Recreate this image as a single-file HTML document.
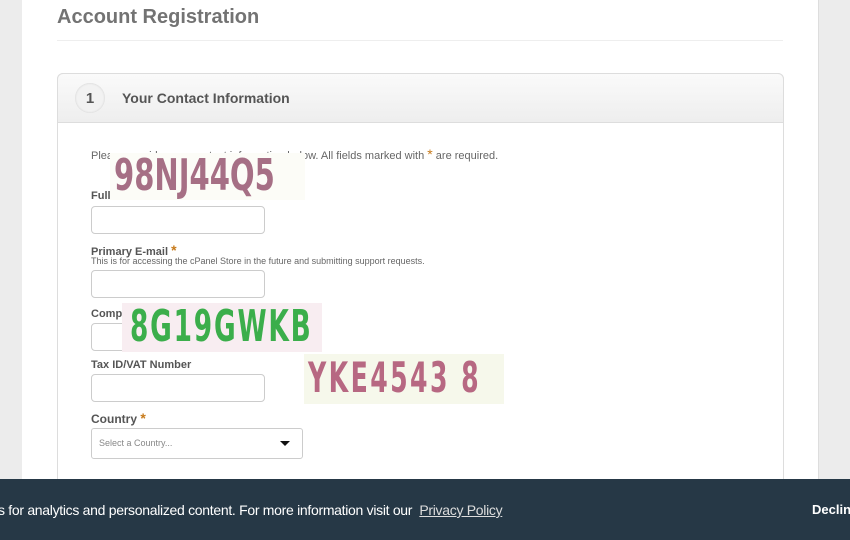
<!DOCTYPE html>
<html><head><meta charset="utf-8"><style>
html,body{margin:0;width:850px;height:540px;overflow:hidden}
body{background:#ececec;font-family:"Liberation Sans",sans-serif;position:relative}
.wrap{position:absolute;left:22px;top:0;width:796px;height:540px;background:#fff;border-right:1px solid #ddd}
.abs{position:absolute}
h1{position:absolute;left:57px;top:6px;margin:0;font-size:20px;color:#737373;font-weight:bold}
.hr{left:57px;top:40px;width:726px;height:1px;background:#eee}
.panel{left:57px;top:73px;width:725px;height:460px;border:1px solid #ddd;border-radius:6px 6px 0 0}
.ph{left:57px;top:73px;width:725px;height:48px;border:1px solid #ddd;border-radius:6px 6px 0 0;background:linear-gradient(#fafafa,#eeeeee);border-bottom:1px solid #ddd}
.num{left:75px;top:83px;width:30px;height:30px;border-radius:50%;background:#f2f2f2;box-shadow:0 0 2px #ccc inset;text-align:center;line-height:32px;font-weight:bold;color:#555;font-size:15px}
.pt{left:122px;top:90px;font-size:14px;font-weight:bold;color:#555}
.lbl{font-size:11px;font-weight:bold;color:#555}
.star{color:#c77a1a;font-size:14px}
.inp{width:172px;height:26px;border:1px solid #ccc;border-radius:4px;background:#fff}
.small{font-size:9px;color:#666}
.cap{overflow:hidden}
.cap span{position:absolute;left:4px;display:block;font-family:"DejaVu Sans",sans-serif;font-weight:bold;white-space:nowrap;transform-origin:0 0}
.banner{left:0;top:479px;width:850px;height:61px;background:#263846;color:#fff;font-size:14px}
</style></head><body>
<div class="wrap"></div>
<h1>Account Registration</h1>
<div class="abs hr"></div>
<div class="abs panel"></div>
<div class="abs ph"></div>
<div class="abs num">1</div>
<div class="abs pt">Your Contact Information</div>
<div class="abs" style="left:91px;top:146px;font-size:11px;color:#666">Please provide your contact information below. All fields marked with <span class="star">*</span> are required.</div>
<div class="abs lbl" style="left:91px;top:190px">Full Name</div>
<div class="abs inp" style="left:91px;top:206px"></div>
<div class="abs lbl" style="left:91px;top:242px">Primary E-mail <span class="star">*</span></div>
<div class="abs small" style="left:91px;top:256px">This is for accessing the cPanel Store in the future and submitting support requests.</div>
<div class="abs inp" style="left:91px;top:270px"></div>
<div class="abs lbl" style="left:91px;top:308px">Company</div>
<div class="abs inp" style="left:91px;top:323px"></div>
<div class="abs lbl" style="left:91px;top:359px">Tax ID/VAT Number</div>
<div class="abs inp" style="left:91px;top:374px"></div>
<div class="abs lbl" style="left:91px;top:410px;font-size:12px">Country <span class="star">*</span></div>
<div class="abs" style="left:91px;top:428px;width:210px;height:29px;border:1px solid #ccc;border-radius:3px;background:#fff;font-size:9px;color:#888;line-height:29px;text-indent:7px">Select a Country...<span style="position:absolute;left:188px;top:12px;width:0;height:0;border-left:5px solid transparent;border-right:5px solid transparent;border-top:5px solid #111"></span></div>

<div class="abs cap" style="left:110px;top:153px;width:195px;height:47px;background:#fcfcf7"><span style="top:-2px;color:#a66f85;font-size:44px;line-height:50px;transform:scaleX(0.66)">98NJ44Q5</span></div>
<div class="abs cap" style="left:122px;top:303px;width:200px;height:49px;background:#f8edf1"><span style="top:-2px;left:8px;color:#3bae4b;font-size:44px;line-height:52px;letter-spacing:3px;transform:scaleX(0.6)">8G19GWKB</span></div>
<div class="abs cap" style="left:304px;top:354px;width:200px;height:50px;background:#f6f8eb"><span style="top:-2px;color:#b76882;font-size:42px;line-height:52px;letter-spacing:4px;transform:scaleX(0.6)">YKE4543 8</span></div>

<div class="abs banner">
<div class="abs" style="left:-2px;top:23px;white-space:nowrap;font-size:14px;letter-spacing:-0.3px">s for analytics and personalized content. For more information visit our&nbsp; <span style="text-decoration:underline;color:#ddd">Privacy Policy</span></div>
<div class="abs" style="left:812px;top:23px;font-weight:bold;font-size:13px">Decline</div>
</div>
</body></html>
